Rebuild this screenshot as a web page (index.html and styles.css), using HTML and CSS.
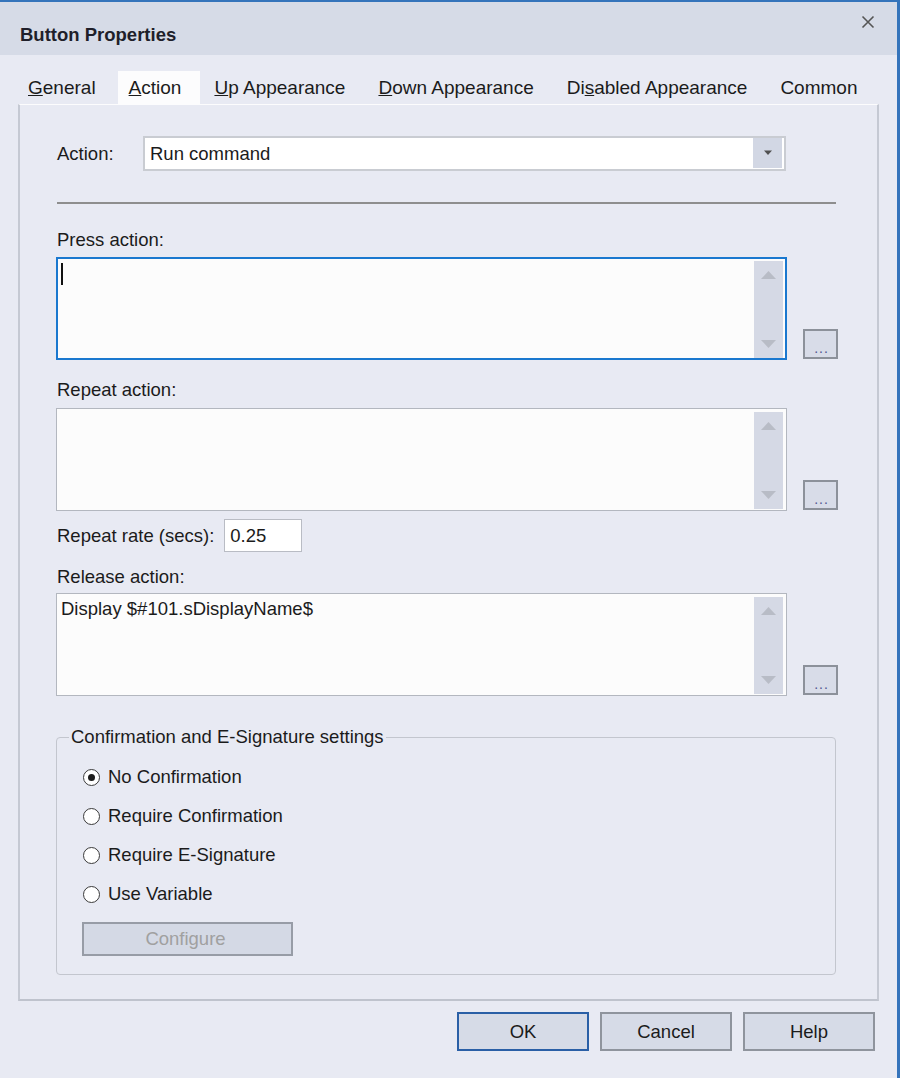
FILE: index.html
```html
<!DOCTYPE html>
<html lang="en">

<head>
    <meta charset="UTF-8">
    <title>Button Properties</title>
    <link rel="stylesheet" href="styles.css">
</head>

<body>
    <div class="dialog">
        <div class="titlebar">
            <span class="title">Button Properties</span>
            <span class="close">
                <svg width="14" height="14" viewBox="0 0 14 14">
                    <path d="M1.5 1.5 L12.5 12.5 M12.5 1.5 L1.5 12.5" stroke="#555" stroke-width="1.6" fill="none" />
                </svg>
            </span>
        </div>

        <div class="tabs">
            <div class="tab"><u>G</u>eneral</div>
            <div class="tab active"><u>A</u>ction</div>
            <div class="tab"><u>U</u>p Appearance</div>
            <div class="tab"><u>D</u>own Appearance</div>
            <div class="tab">Di<u>s</u>abled Appearance</div>
            <div class="tab">Common</div>
        </div>

        <div class="panel">
            <!-- Action type -->
            <div class="action-row">
                <span class="action-label">Action:</span>
                <div class="combo">
                    <span class="combo-text">Run command</span>
                    <span class="combo-btn">
                        <svg width="10" height="6" viewBox="0 0 10 6"><path d="M1 0.5 L9 0.5 L5 5 Z" fill="#505050" /></svg>
                    </span>
                </div>
            </div>

            <div class="separator"></div>

            <!-- Press action -->
            <div class="label first">Press action:</div>
            <div class="edit-row">
                <div class="edit focused">
                    <div class="edit-text"><span class="caret"></span></div>
                    <div class="scrollbar">
                        <svg width="29" height="28" viewBox="0 0 29 28"><path d="M7 18 L22 18 L14.5 10 Z" fill="#b8bcc6" /></svg>
                        <svg width="29" height="28" viewBox="0 0 29 28"><path d="M7 10 L22 10 L14.5 18 Z" fill="#b8bcc6" /></svg>
                    </div>
                </div>
                <button class="dots">...</button>
            </div>

            <!-- Repeat action -->
            <div class="label">Repeat action:</div>
            <div class="edit-row">
                <div class="edit">
                    <div class="edit-text"></div>
                    <div class="scrollbar">
                        <svg width="29" height="28" viewBox="0 0 29 28"><path d="M7 18 L22 18 L14.5 10 Z" fill="#b8bcc6" /></svg>
                        <svg width="29" height="28" viewBox="0 0 29 28"><path d="M7 10 L22 10 L14.5 18 Z" fill="#b8bcc6" /></svg>
                    </div>
                </div>
                <button class="dots">...</button>
            </div>

            <div class="rate-row">
                <span>Repeat rate (secs):</span>
                <div class="rate-input">0.25</div>
            </div>

            <!-- Release action -->
            <div class="label release">Release action:</div>
            <div class="edit-row">
                <div class="edit">
                    <div class="edit-text">Display $#101.sDisplayName$</div>
                    <div class="scrollbar">
                        <svg width="29" height="28" viewBox="0 0 29 28"><path d="M7 18 L22 18 L14.5 10 Z" fill="#b8bcc6" /></svg>
                        <svg width="29" height="28" viewBox="0 0 29 28"><path d="M7 10 L22 10 L14.5 18 Z" fill="#b8bcc6" /></svg>
                    </div>
                </div>
                <button class="dots">...</button>
            </div>

            <!-- Confirmation settings -->
            <fieldset class="group">
                <legend>Confirmation and E-Signature settings</legend>
                <div class="radio-list">
                    <div class="radio checked"><span class="circle"></span>No Confirmation</div>
                    <div class="radio"><span class="circle"></span>Require Confirmation</div>
                    <div class="radio"><span class="circle"></span>Require E-Signature</div>
                    <div class="radio"><span class="circle"></span>Use Variable</div>
                </div>
                <button class="btn-configure" disabled>Configure</button>
            </fieldset>
        </div>

        <div class="buttons">
            <button class="btn default">OK</button>
            <button class="btn">Cancel</button>
            <button class="btn">Help</button>
        </div>
    </div>
</body>

</html>
```

FILE: styles.css
```css
body {
    margin: 0;
    padding: 0;
    font-family: "Liberation Sans", Arial, sans-serif;
    font-size: 18.5px;
    color: #1b1b1b;
    background-color: #e8eaf3;
}

.dialog {
    width: 900px;
    height: 1078px;
    box-sizing: border-box;
    border-top: 2px solid #3574bb;
    border-right: 3px solid #3574bb;
    background-color: #e8eaf3;
    overflow: hidden;
}

.titlebar {
    height: 53px;
    background-color: #d6dbe7;
    display: flex;
    justify-content: space-between;
    align-items: flex-start;
    padding-left: 20px;
    padding-right: 22px;
}

.title {
    font-size: 18.5px;
    font-weight: bold;
    color: #1f1f2a;
    line-height: 22px;
    margin-top: 22px;
}

.close {
    display: flex;
    margin-top: 13px;
}

.tabs {
    display: flex;
    gap: 3px;
    padding-left: 17px;
    margin-top: 16px;
    height: 33px;
    font-size: 19px;
}

.tab {
    padding: 0 19px 0 11px;
    line-height: 33px;
}

.tab.active {
    background-color: #fcfcfd;
}

.panel {
    margin-left: 18px;
    width: 861px;
    box-sizing: border-box;
    border-top: 1px solid #fcfcfd;
    border-left: 2px solid #c5c9d3;
    border-right: 2px solid #c5c9d3;
    border-bottom: 2px solid #bfc3cd;
    padding: 31px 39px 24px 36px;
}

.action-row {
    display: flex;
    align-items: center;
    height: 35px;
}

.action-label {
    width: 87px;
    padding-left: 1px;
    box-sizing: border-box;
}

.combo {
    width: 643px;
    height: 35px;
    box-sizing: border-box;
    border: 2px solid #c9ccd2;
    background-color: #ffffff;
    display: flex;
    align-items: stretch;
    padding: 0 2px 1px 5px;
}

.combo-text {
    flex: 1;
    line-height: 31px;
}

.combo-btn {
    width: 29px;
    background-color: #d2d7e4;
    display: flex;
    align-items: center;
    justify-content: center;
}

.separator {
    width: 779px;
    height: 2px;
    margin: 31px 0 0 1px;
    background-color: #8e8e8e;
}

.label {
    line-height: 22px;
    margin: 19px 0 7px 1px;
}

.label.first {
    margin-top: 25px;
    margin-bottom: 6px;
}

.label.release {
    margin-top: 14px;
    margin-bottom: 5px;
}

.edit-row {
    display: flex;
    align-items: flex-end;
    gap: 16px;
}

.edit {
    width: 731px;
    height: 103px;
    box-sizing: border-box;
    border: 1px solid #b3b7bf;
    background-color: #fcfcfc;
    display: flex;
    padding: 3px 3px 1px 4px;
}

.edit.focused {
    border-color: #1a78cf;
    box-shadow: inset 0 0 0 1px #1a78cf;
}

.edit-text {
    flex: 1;
    line-height: 22px;
    padding-top: 1px;
}

.caret {
    display: inline-block;
    width: 2px;
    height: 22px;
    background-color: #111;
    margin-top: 1px;
    vertical-align: top;
}

.scrollbar {
    width: 29px;
    background-color: #d5d9e5;
    display: flex;
    flex-direction: column;
    justify-content: space-between;
}

.dots {
    width: 35px;
    height: 30px;
    box-sizing: border-box;
    border: 2px solid #8c919a;
    background-color: #d8dce8;
    color: #505590;
    font-family: "Liberation Sans", Arial, sans-serif;
    font-size: 14px;
    letter-spacing: 1px;
    padding: 8px 0 0 2px;
    margin: 0 0 1px 0;
    line-height: 14px;
}

.rate-row {
    display: flex;
    align-items: center;
    gap: 10px;
    margin-top: 8px;
    padding-left: 1px;
}

.rate-input {
    width: 78px;
    height: 33px;
    box-sizing: border-box;
    border: 1px solid #b9bcc4;
    background-color: #ffffff;
    line-height: 31px;
    padding-left: 5px;
}

.group {
    width: 780px;
    box-sizing: border-box;
    margin: 30px 0 0 0;
    border: 1px solid #c3c6ce;
    border-radius: 4px;
    padding: 18px 12px 18px 12px;
}

.group legend {
    padding: 0 2px;
    line-height: 22px;
}

.radio-list {
    display: flex;
    flex-direction: column;
    gap: 17px;
    margin-left: 14px;
}

.radio {
    display: flex;
    align-items: center;
    gap: 8px;
    line-height: 22px;
}

.circle {
    width: 17px;
    height: 17px;
    box-sizing: border-box;
    border: 1px solid #3a3a3a;
    border-radius: 50%;
    background-color: #ffffff;
    display: flex;
    align-items: center;
    justify-content: center;
}

.radio.checked .circle::after {
    content: "";
    width: 7px;
    height: 7px;
    border-radius: 50%;
    background-color: #1c1c1c;
}

.btn-configure {
    display: block;
    width: 211px;
    height: 34px;
    margin: 17px 0 0 13px;
    box-sizing: border-box;
    border: 2px solid #979ca6;
    background-color: #d4d9e5;
    color: #a0a0a0;
    font-family: "Liberation Sans", Arial, sans-serif;
    font-size: 18.5px;
    padding: 0 4px 0 0;
}

.buttons {
    display: flex;
    justify-content: flex-end;
    gap: 11px;
    margin-top: 11px;
    padding-right: 22px;
}

.btn {
    width: 132px;
    height: 39px;
    box-sizing: border-box;
    border: 2px solid #8f949d;
    background-color: #d6dbe7;
    color: #1b1b1b;
    font-family: "Liberation Sans", Arial, sans-serif;
    font-size: 18.5px;
    padding: 0;
}

.btn.default {
    border-color: #2a5fa6;
}
```
